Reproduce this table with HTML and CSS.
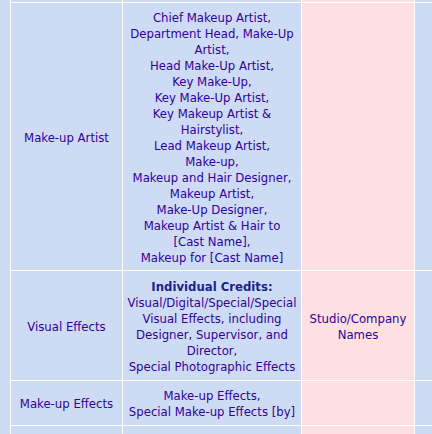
FILE: index.html
```html
<!DOCTYPE html>
<html>
<head>
<meta charset="utf-8">
<link rel="stylesheet" href="styles.css">
</head>
<body>
<div class="sheet">
  <div class="cell edge"></div>

  <div class="cell blue"></div>
  <div class="cell blue"></div>
  <div class="cell pink"></div>
  <div class="cell blue"></div>

  <div class="cell blue">Make-up Artist</div>
  <div class="cell blue">Chief Makeup Artist,<br>Department Head, Make-Up<br>Artist,<br>Head Make-Up Artist,<br>Key Make-Up,<br>Key Make-Up Artist,<br>Key Makeup Artist &amp;<br>Hairstylist,<br>Lead Makeup Artist,<br>Make-up,<br>Makeup and Hair Designer,<br>Makeup Artist,<br>Make-Up Designer,<br>Makeup Artist &amp; Hair to<br>[Cast Name],<br>Makeup for [Cast Name]</div>
  <div class="cell pink"></div>
  <div class="cell blue"></div>

  <div class="cell blue">Visual Effects</div>
  <div class="cell blue"><span><b class="head">Individual Credits:</b><br>Visual/Digital/Special/Special<br>Visual Effects, including<br>Designer, Supervisor, and<br>Director,<br>Special Photographic Effects</span></div>
  <div class="cell pink">Studio/Company<br>Names</div>
  <div class="cell blue"></div>

  <div class="cell blue">Make-up Effects</div>
  <div class="cell blue">Make-up Effects,<br>Special Make-up Effects [by]</div>
  <div class="cell pink"></div>
  <div class="cell blue"></div>

  <div class="cell blue"></div>
  <div class="cell blue"></div>
  <div class="cell pink"></div>
  <div class="cell blue"></div>
</div>
</body>
</html>
```
FILE: styles.css
```css
html, body {
  margin: 0;
  padding: 0;
  background: #ffffff;
  overflow: hidden;
}

.sheet {
  width: 432px;
  height: 434px;
  display: grid;
  grid-template-columns: 10px 111px 178px 112px 1fr;
  grid-template-rows: 2px 267px 109px 44px 1fr;
  gap: 1px;
  background: #ffffff;
  font-family: "DejaVu Sans Condensed", "DejaVu Sans", sans-serif;
  font-size: 13px;
  line-height: 16px;
  color: #330099;
  overflow: hidden;
}

.cell {
  display: flex;
  align-items: center;
  justify-content: center;
  text-align: center;
  padding: 2px 2px 0;
  white-space: nowrap;
  overflow: hidden;
  min-width: 0;
}

.edge {
  grid-row: 1 / -1;
  background: #cddcf4;
  padding: 0;
}

.blue {
  background: #cddcf4;
}

.pink {
  background: #fde0e2;
}

.head {
  color: #1f1f88;
  font-weight: bold;
}
```
